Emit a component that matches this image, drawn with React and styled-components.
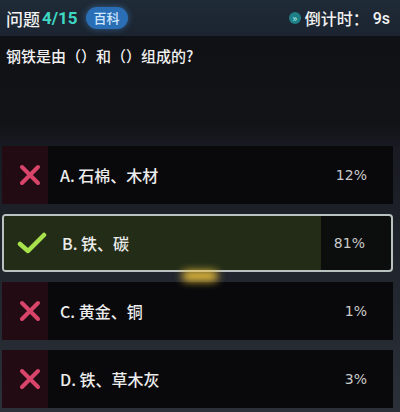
import React from "react";
import styled, { createGlobalStyle } from "styled-components";

const GlobalStyle = createGlobalStyle`
  body {
    margin: 0;
    background: #0e0f12;
    font-family: "Noto Sans CJK SC", "Noto Sans", sans-serif;
  }
`;

const options = [
  { key: "A", text: "石棉、木材", pct: 12, correct: false },
  { key: "B", text: "铁、碳", pct: 81, correct: true },
  { key: "C", text: "黄金、铜", pct: 1, correct: false },
  { key: "D", text: "铁、草木灰", pct: 3, correct: false },
];

function Cross() {
  return (
    <svg width="24" height="24" viewBox="0 0 24 24">
      <path
        d="M4 4 L20 20 M20 4 L4 20"
        stroke="#d9456a"
        strokeWidth="4"
        strokeLinecap="round"
        fill="none"
      />
    </svg>
  );
}

function Check() {
  return (
    <svg width="30" height="24" viewBox="0 0 30 24">
      <path
        d="M3 13 L11 20 L27 4"
        stroke="#a8e24c"
        strokeWidth="4.5"
        strokeLinecap="round"
        strokeLinejoin="round"
        fill="none"
      />
    </svg>
  );
}

function App() {
  return (
    <>
      <GlobalStyle />
      <Page>
        <Header>
          <Left>
            <span>问题</span>
            <Count>4/15</Count>
            <Tag>百科</Tag>
          </Left>
          <Right>
            <Dot>»</Dot>
            <span>倒计时：</span>
            <Secs>9s</Secs>
          </Right>
        </Header>
        <Question>钢铁是由（）和（）组成的?</Question>
        <List>
          {options.map((o) => (
            <Card key={o.key} $correct={o.correct}>
              {o.correct && <Fill style={{ width: `${o.pct + 1}%` }} />}
              <IconBox $correct={o.correct}>
                {o.correct ? <Check /> : <Cross />}
              </IconBox>
              <Label>
                {o.key}. {o.text}
              </Label>
              <Pct>{o.pct}%</Pct>
            </Card>
          ))}
        </List>
        <Glow />
      </Page>
    </>
  );
}

const Page = styled.div`
  position: relative;
  width: 400px;
  height: 412px;
  overflow: hidden;
  background: linear-gradient(180deg, #0f1013 0%, #111317 30%, #181b22 36%, #2b3039 100%);
`;

const Header = styled.div`
  height: 36px;
  display: flex;
  align-items: center;
  justify-content: space-between;
  padding: 0 10px 0 6px;
  background: linear-gradient(180deg, #202b38, #1b2430);
  color: #f2f2f2;
  font-size: 17px;
  font-weight: 500;
`;

const Left = styled.div`
  display: flex;
  align-items: center;
`;

const Count = styled.span`
  color: #3fd8c4;
  font-family: "Roboto", "Liberation Sans", sans-serif;
  font-weight: 700;
  font-size: 17px;
  margin-left: 2px;
`;

const Tag = styled.span`
  margin-left: 8px;
  padding: 0 8px;
  height: 22px;
  line-height: 22px;
  border-radius: 11px;
  background: #2a6fb5;
  color: #cfe6ff;
  font-size: 13px;
  box-shadow: 0 0 6px rgba(70, 150, 230, 0.5);
`;

const Right = styled.div`
  display: flex;
  align-items: center;
  font-size: 16px;
`;

const Dot = styled.span`
  width: 12px;
  height: 12px;
  border-radius: 50%;
  background: #1f7f86;
  color: #a8f0ea;
  font-size: 10px;
  line-height: 11px;
  text-align: center;
  margin-right: 4px;
`;

const Secs = styled.span`
  font-family: "Roboto", "Liberation Sans", sans-serif;
  font-size: 16px;
  margin-left: 4px;
`;

const Question = styled.div`
  height: 110px;
  padding: 8px 0 0 6px;
  box-sizing: border-box;
  color: #f0f0f0;
  font-size: 15px;
  font-weight: 500;
  line-height: 24px;
`;

const List = styled.div`
  display: flex;
  flex-direction: column;
  gap: 10px;
  padding: 0 7px 0 2px;
`;

const Card = styled.div`
  position: relative;
  height: 58px;
  display: flex;
  align-items: center;
  box-sizing: border-box;
  background: ${(p) => (p.$correct ? "#0c0e0d" : "#09090c")};
  border: ${(p) => (p.$correct ? "2px solid #b9c1c1" : "none")};
  border-radius: ${(p) => (p.$correct ? "4px" : "0")};
  overflow: hidden;
`;

const Fill = styled.div`
  position: absolute;
  left: 0;
  top: 0;
  bottom: 0;
  background: #222c17;
`;

const IconBox = styled.div`
  position: relative;
  width: 46px;
  height: 100%;
  display: flex;
  align-items: center;
  justify-content: center;
  padding-left: 10px;
  box-sizing: border-box;
  background: ${(p) => (p.$correct ? "transparent" : "#230b13")};
`;

const Label = styled.div`
  position: relative;
  margin-left: 12px;
  flex: 1;
  color: #ececec;
  font-size: 16px;
  font-weight: 500;
`;

const Pct = styled.div`
  position: relative;
  margin-right: 26px;
  color: #c9c9c9;
  font-family: "DejaVu Sans", sans-serif;
  font-size: 14px;
`;

const Glow = styled.div`
  position: absolute;
  left: 182px;
  top: 271px;
  width: 36px;
  height: 10px;
  border-radius: 6px;
  background: #f2c53a;
  filter: blur(4px);
`;

export default App;
